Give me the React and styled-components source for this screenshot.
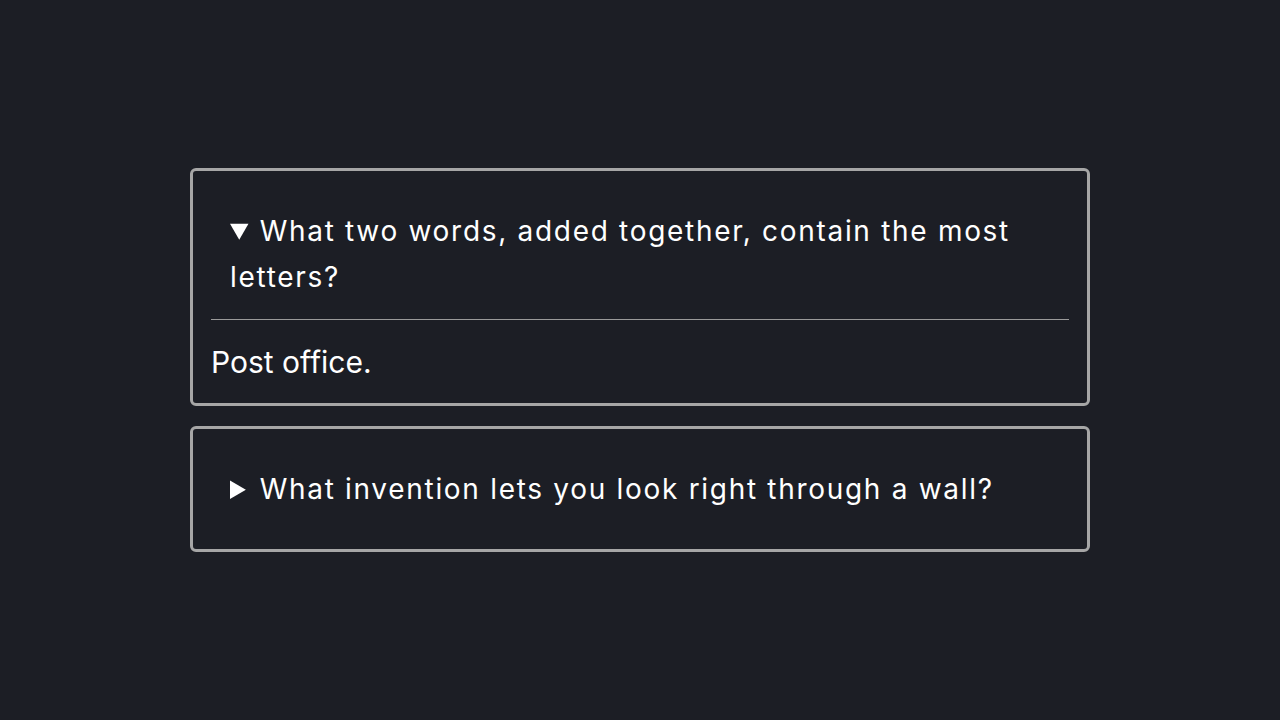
import React from 'react';
import styled, { createGlobalStyle } from 'styled-components';

const GlobalStyle = createGlobalStyle`
  * {
    box-sizing: border-box;
  }

  html,
  body {
    margin: 0;
    padding: 0;
    background-color: #1c1e25;
  }

  body {
    font-family: Inter, 'Noto Sans', sans-serif;
    color: #ffffff;
  }
`;

const Page = styled.main`
  min-height: 100vh;
  display: flex;
  flex-direction: column;
  align-items: center;
  justify-content: center;
  gap: 20px;
  padding: 0 20px;
`;

const Card = styled.details`
  width: 900px;
  max-width: 100%;
  padding: 18px;
  border: 3px solid #a6a6a6;
  border-radius: 6px;
  background-color: #1c1e25;

  &[open] summary {
    margin-bottom: 19px;
    border-bottom: 1px solid #9a9a9a;
  }
`;

const Question = styled.summary`
  padding: 19px;
  font-size: 28px;
  line-height: 46px;
  letter-spacing: 1.7px;
  cursor: pointer;
`;

const Answer = styled.p`
  margin: 0;
  font-size: 30px;
  line-height: 46px;
`;

const faqs = [
  {
    q: 'What two words, added together, contain the most letters?',
    a: 'Post office.',
    open: true,
  },
  {
    q: 'What invention lets you look right through a wall?',
    a: 'The window.',
    open: false,
  },
];

const App = () => (
  <>
    <GlobalStyle />
    <Page>
      {faqs.map(item => (
        <Card key={item.q} open={item.open}>
          <Question>{item.q}</Question>
          <Answer>{item.a}</Answer>
        </Card>
      ))}
    </Page>
  </>
);

export default App;
